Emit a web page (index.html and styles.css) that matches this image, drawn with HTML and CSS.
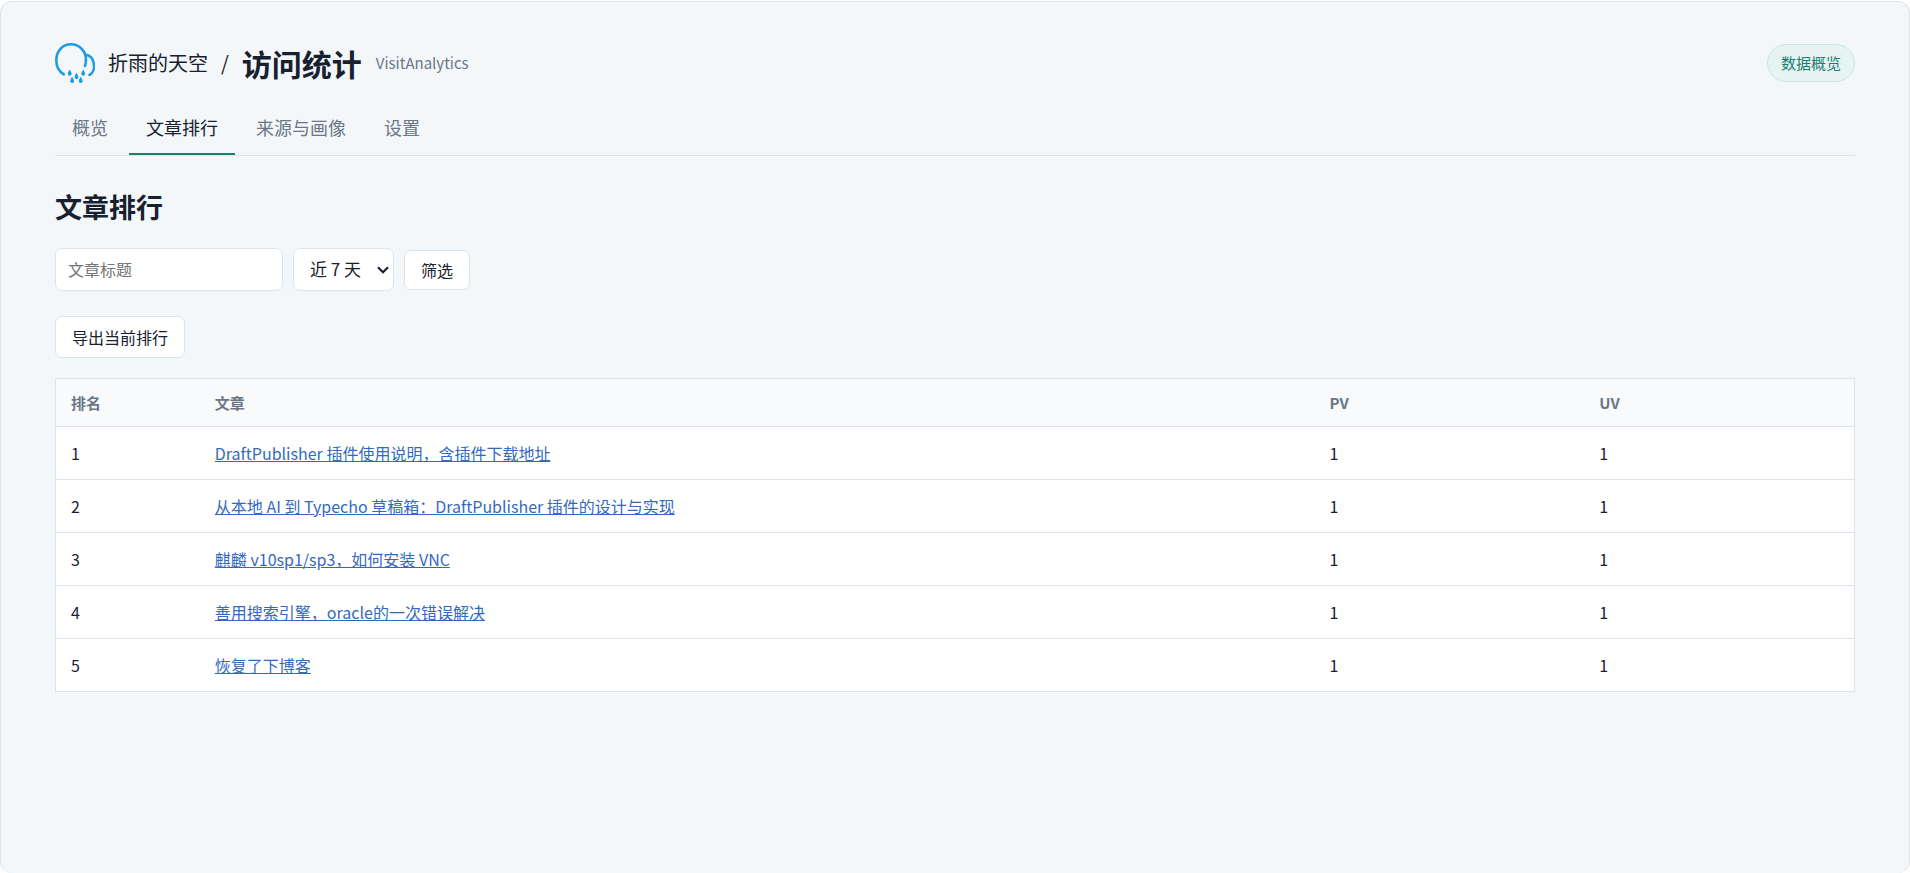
FILE: index.html
```html
<!DOCTYPE html>
<html lang="zh-CN">
<head>
<meta charset="utf-8">
<meta name="viewport" content="width=device-width, initial-scale=1">
<title>文章排行 - 访问统计</title>
<link rel="stylesheet" href="styles.css">
</head>
<body>
<div class="window">
  <header class="header">
    <div class="brand">
      <svg class="logo" viewBox="0 0 40 40" aria-hidden="true">
        <g fill="none" stroke="#1d9ce0" stroke-width="2.6" stroke-linecap="round">
          <path d="M8.800 31.300C4 28.500 1.300 23.500 1.300 17.500C1.300 8 7.500 1.300 16 1.300C24.500 1.300 31 8.500 31 16.500Q31 20 30 23"/>
          <path d="M31 11.800C40.500 13.500 41.500 28.500 34.500 32"/>
        </g>
        <g fill="#1d9ce0">
          <path id="drop" d="M14.700 26.500q2.400 3.600 1.800 5a1.900 1.900 0 0 1-3.600 0q-.6-1.400 1.800-5z"/>
          <use href="#drop" x="13.500"/>
          <use href="#drop" x="6.800" y="3.200"/>
          <use href="#drop" x="2.400" y="7.200"/>
          <use href="#drop" x="11" y="7.200"/>
        </g>
      </svg>
      <span class="site">折雨的天空</span>
      <span class="slash">/</span>
      <h1 class="title">访问统计</h1>
      <span class="plugin">VisitAnalytics</span>
    </div>
    <a class="pill" href="#">数据概览</a>
  </header>
  <nav class="tabs">
    <a class="tab" href="#">概览</a>
    <a class="tab active" href="#" aria-current="page">文章排行</a>
    <a class="tab" href="#">来源与画像</a>
    <a class="tab" href="#">设置</a>
  </nav>
  <main>
    <h2 class="heading">文章排行</h2>
    <form class="filters">
      <input class="control search" type="text" placeholder="文章标题" aria-label="文章标题">
      <div class="select">
        <select class="control range" aria-label="时间范围"><option>近 7 天</option></select>
        <svg class="chevron" viewBox="0 0 12 8" aria-hidden="true"><path d="M1 1.300l5 5 5-5" fill="none" stroke="#17202e" stroke-width="2.200"/></svg>
      </div>
      <button class="button" type="button">筛选</button>
    </form>
    <div class="actions"><button class="button export" type="button">导出当前排行</button></div>
    <table class="ranking">
      <colgroup><col class="col-rank"><col class="col-article"><col class="col-count"><col class="col-count"></colgroup>
      <thead><tr><th>排名</th><th>文章</th><th>PV</th><th>UV</th></tr></thead>
      <tbody>
        <tr><td>1</td><td><a href="#">DraftPublisher 插件使用说明，含插件下载地址</a></td><td>1</td><td>1</td></tr>
        <tr><td>2</td><td><a href="#">从本地 AI 到 Typecho 草稿箱：DraftPublisher 插件的设计与实现</a></td><td>1</td><td>1</td></tr>
        <tr><td>3</td><td><a href="#">麒麟 v10sp1/sp3，如何安装 VNC</a></td><td>1</td><td>1</td></tr>
        <tr><td>4</td><td><a href="#">善用搜索引擎，oracle的一次错误解决</a></td><td>1</td><td>1</td></tr>
        <tr><td>5</td><td><a href="#">恢复了下博客</a></td><td>1</td><td>1</td></tr>
      </tbody>
    </table>
  </main>
</div>
</body>
</html>
```
FILE: styles.css
```css
* { box-sizing: border-box; }
body {
  margin: 0;
  background: #fff;
  color: #17202e;
  font: 16px/26px "Noto Sans CJK SC", sans-serif;
}
.window {
  min-height: calc(100vh - 1px);
  margin-top: 1px;
  padding: 39px 54px;
  border: 1px solid #e0e2e3;
  border-bottom: 0;
  border-radius: 12px;
  background: #f3f7fa;
}
.header { display: flex; align-items: center; justify-content: space-between; }
.brand { display: flex; align-items: center; }
.logo { width: 40px; height: 40px; margin-right: 13px; }
.site, .slash { font-size: 20px; }
.slash { margin: 0 13px; }
.title { margin: 0 14px 0 0; font-size: 30px; line-height: 44px; }
.plugin { color: #6b7785; font-size: 15px; }
.pill {
  padding: 5px 13px;
  border: 1px solid #c9e6de;
  border-radius: 20px;
  background: #e7f3f1;
  color: #17806f;
  font-size: 15px;
  text-decoration: none;
}
.tabs { display: flex; gap: 4px; margin-top: 18px; border-bottom: 1px solid #dce3e8; }
.tab {
  padding: 11px 17px 13px;
  border-bottom: 2px solid transparent;
  color: #6b7785;
  font-size: 18px;
  text-decoration: none;
}
.active { border-color: #17806f; color: #17202e; }
.heading { margin: 31px 0 21px; font-size: 27px; line-height: 40px; }
.filters { display: flex; align-items: center; gap: 10px; }
.control, .button {
  border: 1px solid #dde3ea;
  border-radius: 7px;
  background: #fff;
  color: #17202e;
  font: inherit;
}
.control { height: 43px; }
.search { width: 228px; padding: 0 12px 2px; }
.search::placeholder { color: #757575; opacity: 1; }
.select { display: grid; align-items: center; }
.range {
  grid-area: 1 / 1;
  width: 101px;
  padding: 0 0 2px 16px;
  font-size: 17px;
  appearance: none;
}
.chevron {
  grid-area: 1 / 1;
  justify-self: end;
  width: 12px;
  height: 8px;
  margin-right: 5px;
  pointer-events: none;
}
.button { padding: 6px 16px; }
.actions { margin: 25px 0 20px; }
.export { display: block; padding: 7px 16px; }
.ranking {
  width: 100%;
  border: 1px solid #dde3ea;
  border-spacing: 0;
  background: #fff;
  table-layout: fixed;
}
.col-rank { width: 8%; }
.col-article { width: 62%; }
.col-count { width: 15%; }
th, td { padding: 13px 15px; text-align: left; }
th {
  padding-top: 11px;
  padding-bottom: 10px;
  background: #f8fafc;
  color: #6b7785;
  font-size: 15px;
}
td { border-top: 1px solid #dde3ea; }
td a { color: #3569bd; }
```
